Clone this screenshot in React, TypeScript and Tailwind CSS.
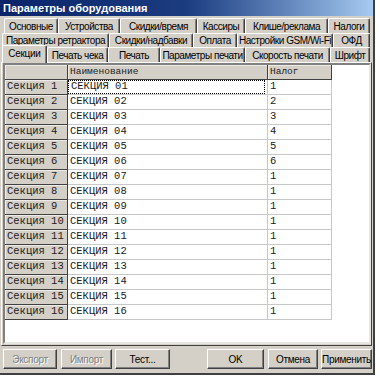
const row1 = [
  { label: "Основные", w: "w-[54px]" },
  { label: "Устройства", w: "w-[62px]" },
  { label: "Скидки/время", w: "w-[77px]" },
  { label: "Кассиры", w: "w-[48px]" },
  { label: "Клише/реклама", w: "w-[83px]" },
  { label: "Налоги", w: "w-[42px]" },
];

const row2 = [
  { label: "Параметры ретрактора", w: "w-[107px]" },
  { label: "Скидки/надбавки", w: "w-[84px]" },
  { label: "Оплата", w: "w-[44px]" },
  { label: "Настройки GSM/Wi-Fi", w: "w-[96px]" },
  { label: "ОФД", w: "w-[37px]" },
];

const row3 = [
  { label: "Печать чека", w: "w-[61px]" },
  { label: "Печать", w: "w-[52px]" },
  { label: "Параметры печати", w: "w-[85px]" },
  { label: "Скорость печати", w: "w-[85px]" },
  { label: "Шрифт", w: "w-[40px]" },
];

const taxes = [1, 2, 3, 4, 5, 6, 1, 1, 1, 1, 1, 1, 1, 1, 1, 1];

const tabCls =
  "h-full shrink-0 flex items-center justify-center whitespace-nowrap border-l border-t border-white border-r border-r-[#404040] rounded-t-[2px] shadow-[inset_-1px_0_#808080] text-[10px] tracking-[-0.45px]";

function Tab({ label, w }: { label: string; w: string }) {
  return <div className={`${tabCls} ${w}`}>{label}</div>;
}

function Button({
  label,
  w,
  disabled,
}: {
  label: string;
  w: string;
  disabled?: boolean;
}) {
  return (
    <div
      className={`${w} h-[20px] shrink-0 flex items-center justify-center whitespace-nowrap border-l border-t border-white border-r border-b border-r-[#404040] border-b-[#404040] shadow-[inset_-1px_-1px_#808080] text-[10px] tracking-[-0.3px] ${
        disabled ? "text-[#808080] [text-shadow:1px_1px_#fff]" : "text-black"
      }`}
    >
      {label}
    </div>
  );
}

const fixedCell =
  "h-full shrink-0 bg-[#d4d0c8] border-r border-b border-[#404040] shadow-[inset_1px_1px_#ecebe6] flex items-center pl-[2px] whitespace-nowrap overflow-hidden";
const dataCell =
  "h-full shrink-0 bg-white border-r border-b border-[#c8c8c8] flex items-center pl-[2px] whitespace-nowrap";

export default function App() {
  return (
    <div className="w-[380px] h-[378px] bg-white font-['Liberation_Sans',sans-serif] text-[11px] text-black">
      <div className="w-[375px] h-[375px] bg-[#d4d0c8] border-r-2 border-b-2 border-[#404040] flex flex-col">
        <div className="h-[16px] shrink-0 bg-linear-to-r from-[#0a246a] via-[#1c3c80] to-[#a6caf0] flex items-center pl-[3px] text-white font-bold text-[11px]">
          Параметры оборудования
        </div>

        <div className="mt-[2px] flex flex-col">
          <div className="flex h-[15px] pl-[4px]">
            {row1.map((t) => (
              <Tab key={t.label} {...t} />
            ))}
          </div>
          <div className="flex h-[14px] pl-[2px]">
            {row2.map((t) => (
              <Tab key={t.label} {...t} />
            ))}
          </div>
          <div className="flex h-[15px] pl-[2px] items-start">
            <div className="relative z-10 -mt-[2px] h-[18px] w-[45px] shrink-0 flex items-center justify-center bg-[#d4d0c8] border-l border-t border-white border-r border-r-[#404040] rounded-t-[2px] shadow-[inset_-1px_0_#808080] pb-[2px] text-[10px] tracking-[-0.3px]">
              Секции
            </div>
            {row3.map((t) => (
              <Tab key={t.label} {...t} />
            ))}
          </div>
        </div>

        <div className="mx-[1px] h-[284px] shrink-0 border border-white border-r-[#404040] border-b-[#404040] pl-[1px] pb-[1px]">
          <div className="h-full border-2 border-t-[#808080] border-l-[#808080] border-r-[#e8e6e0] border-b-[#e8e6e0] bg-white overflow-hidden font-['Liberation_Mono',monospace] text-[#202020]">
            <div className="flex h-[15px] text-[9.5px]">
              <div className={`${fixedCell} w-[63px]`} />
              <div className={`${fixedCell} w-[200px]`}>Наименование</div>
              <div className={`${fixedCell} w-[64px]`}>Налог</div>
            </div>
            {taxes.map((tax, i) => (
              <div key={i} className="flex h-[15px] text-[10.5px]">
                <div className={`${fixedCell} w-[63px]`}>
                  Секция {i + 1}
                </div>
                <div className={`${dataCell} w-[200px]`}>
                  {i === 0 ? (
                    <div className="h-full w-full -ml-[2px] pl-[2px] flex items-center border border-dotted border-black">
                      СЕКЦИЯ {String(i + 1).padStart(2, "0")}
                    </div>
                  ) : (
                    <>СЕКЦИЯ {String(i + 1).padStart(2, "0")}</>
                  )}
                </div>
                <div className={`${dataCell} w-[64px]`}>{tax}</div>
              </div>
            ))}
          </div>
        </div>

        <div className="mt-[3px] flex pl-[3px]">
          <Button label="Экспорт" w="w-[54px]" disabled />
          <div className="ml-[4px]">
            <Button label="Импорт" w="w-[51px]" disabled />
          </div>
          <div className="ml-[3px]">
            <Button label="Тест..." w="w-[55px]" />
          </div>
          <div className="ml-[37px]">
            <Button label="OK" w="w-[57px]" />
          </div>
          <div className="ml-[4px]">
            <Button label="Отмена" w="w-[50px]" />
          </div>
          <div className="ml-[3px]">
            <Button label="Применить" w="w-[51px]" />
          </div>
        </div>
      </div>
    </div>
  );
}
